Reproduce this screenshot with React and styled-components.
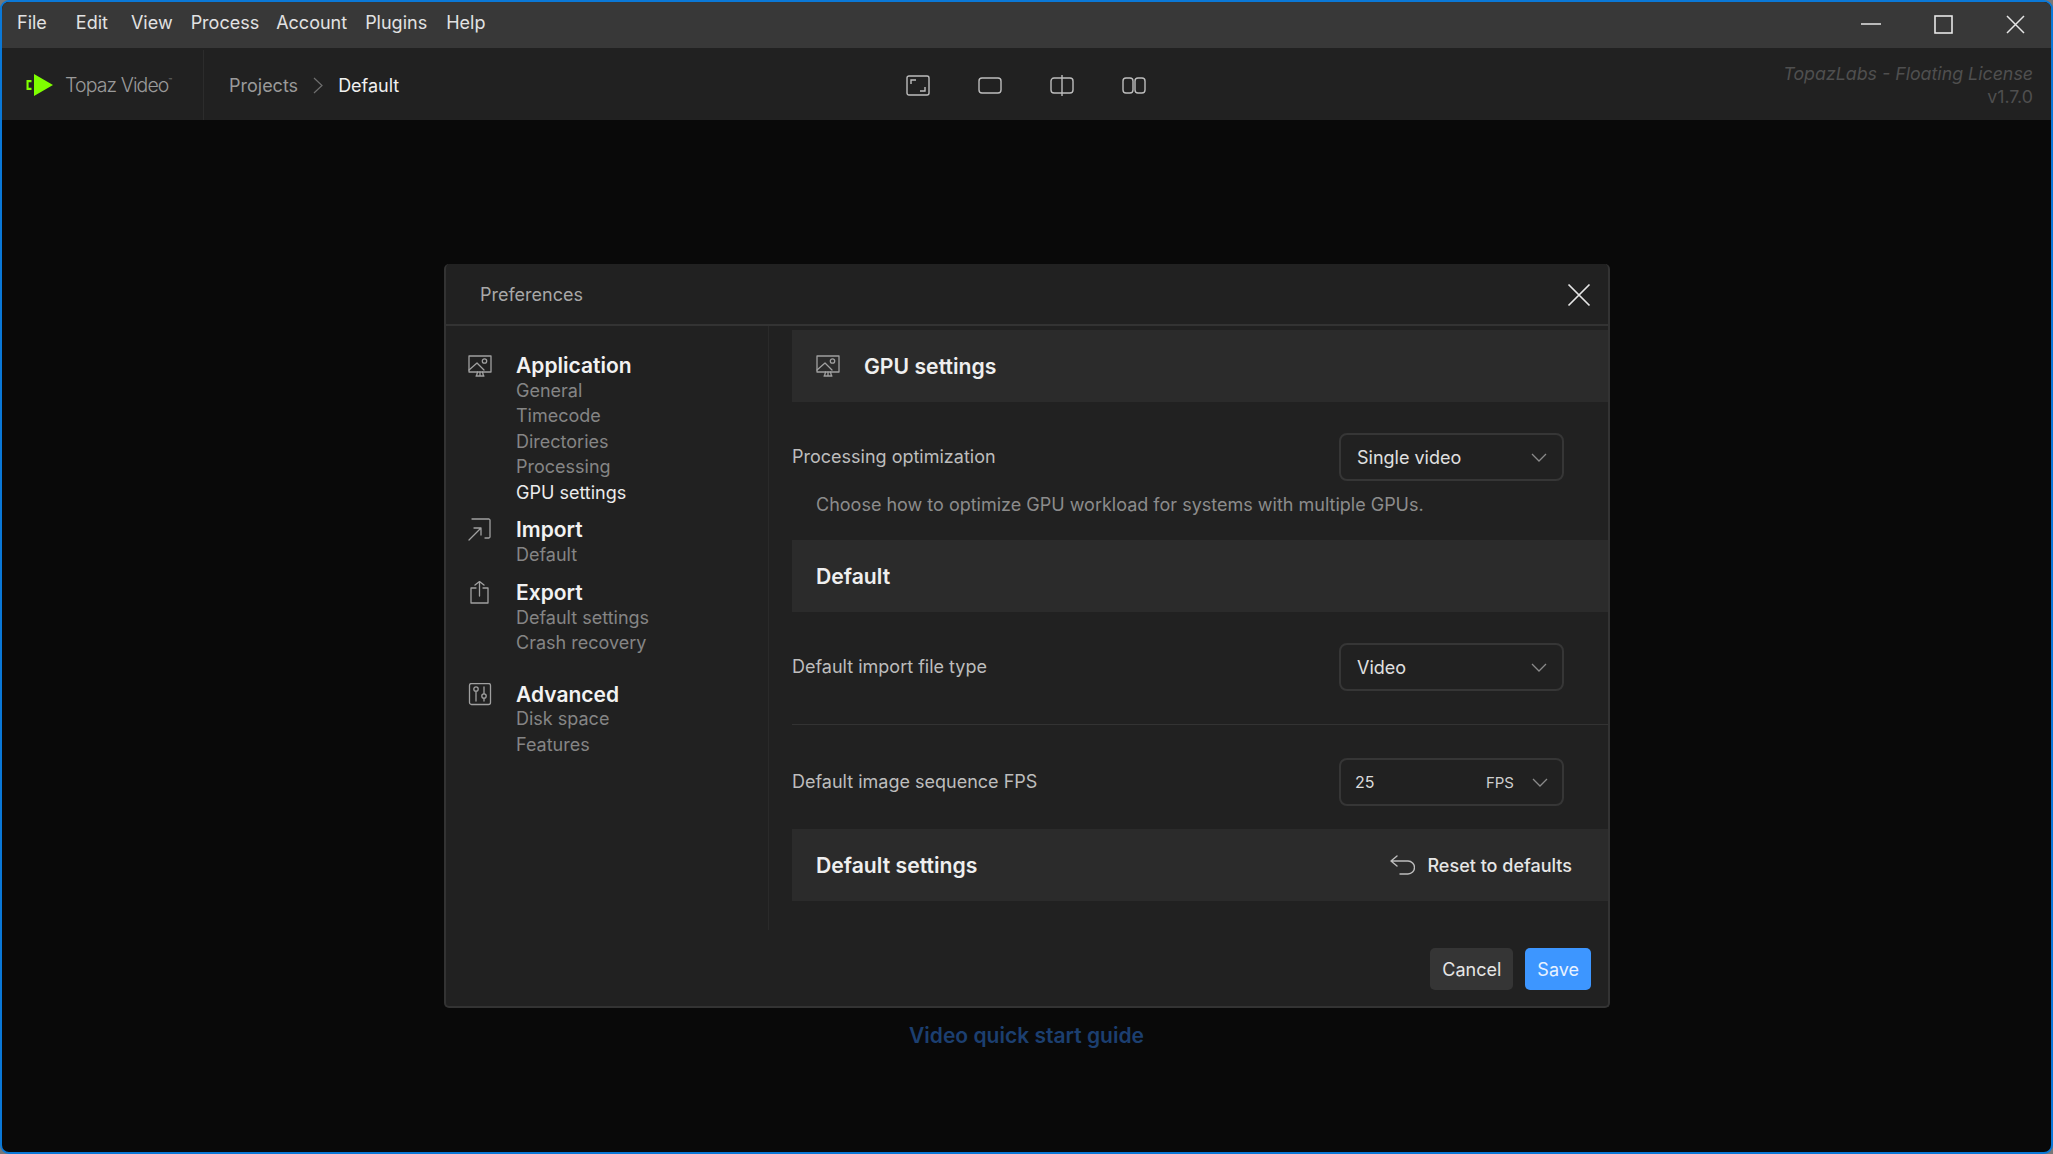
import styled, { createGlobalStyle } from 'styled-components'

const GlobalStyle = createGlobalStyle`
  html, body {
    margin: 0;
    padding: 0;
    background: #777;
  }
  body {
    font-family: "Inter", "Liberation Sans", sans-serif;
    overflow: hidden;
  }
  * { box-sizing: border-box; }
`

const MENU = [
  { label: 'File', gap: 29 },
  { label: 'Edit', gap: 23 },
  { label: 'View', gap: 18 },
  { label: 'Process', gap: 17 },
  { label: 'Account', gap: 18 },
  { label: 'Plugins', gap: 19 },
  { label: 'Help', gap: 0 },
]

const NAV = [
  { title: 'Application', Icon: MonitorIcon, gap: 0, items: ['General', 'Timecode', 'Directories', 'Processing', 'GPU settings'], active: 'GPU settings' },
  { title: 'Import', Icon: ImportIcon, gap: 11, items: ['Default'] },
  { title: 'Export', Icon: ExportIcon, gap: 12, items: ['Default settings', 'Crash recovery'] },
  { title: 'Advanced', Icon: SlidersIcon, gap: 25, items: ['Disk space', 'Features'] },
]

function Svg({ size = 24, height, children }) {
  return (
    <svg width={size} height={height || size} viewBox={`0 0 ${size} ${height || size}`} fill="none" stroke="currentColor" strokeWidth="1.3" strokeLinecap="round" strokeLinejoin="round">
      {children}
    </svg>
  )
}

function MonitorIcon() {
  return (
    <Svg size={24}>
      <path d="M1 2h22v16H1z" />
      <path d="M1 16l8-7 7 7" />
      <circle cx="16.5" cy="7" r="2.2" />
      <path d="M12 18v3.5M8 22h8M9.5 18l-1 4M14.5 18l1 4" />
    </Svg>
  )
}

function ImportIcon() {
  return (
    <Svg size={24}>
      <path d="M4 1h17a2 2 0 0 1 1 1v17a2 2 0 0 1-1 1h-4" />
      <path d="M1 22L13 10M6 10h7v7" />
    </Svg>
  )
}

function ExportIcon() {
  return (
    <Svg size={24}>
      <path d="M8 7H3v15h17V7h-5" />
      <path d="M11.5 15V.5M7 4l4.5-3.5L16 4" />
    </Svg>
  )
}

function SlidersIcon() {
  return (
    <Svg size={24}>
      <rect x="1.5" y="0.5" width="21" height="21" rx="2" />
      <circle cx="8" cy="6" r="2.2" />
      <circle cx="16" cy="13" r="2.2" />
      <path d="M8 8.5V18M16 4v6.5M16 15.5V18" />
    </Svg>
  )
}

function Chevron() {
  return (
    <svg width="16" height="9" viewBox="0 0 16 9" fill="none" stroke="#8a8a8a" strokeWidth="1.3">
      <path d="M1 1l7 7 7-7" />
    </svg>
  )
}

function Logo() {
  return (
    <svg width="29" height="24" viewBox="0 0 29 24">
      <path d="M9 1l19 11L9 23z" fill="#7fff00" />
      <path d="M6.5 7H1.5v10h5v-2.2H3.6V9.2h2.9z" fill="#7fff00" />
    </svg>
  )
}

function App() {
  return (
    <>
      <GlobalStyle />
      <Window>
        <TitleBar>
          <Menu>
            {MENU.map(m => <MenuItem key={m.label} $gap={m.gap}>{m.label}</MenuItem>)}
          </Menu>
          <WindowControls>
            <WindowButton>
              <svg width="20" height="2" viewBox="0 0 20 2"><path d="M0 1h20" stroke="#e6e6e6" strokeWidth="1.6" /></svg>
            </WindowButton>
            <WindowButton>
              <svg width="19" height="19" viewBox="0 0 19 19" fill="none"><rect x="1" y="1" width="17" height="17" stroke="#e6e6e6" strokeWidth="1.6" /></svg>
            </WindowButton>
            <WindowButton>
              <svg width="19" height="19" viewBox="0 0 19 19" fill="none"><path d="M1 1l17 17M18 1L1 18" stroke="#e6e6e6" strokeWidth="1.5" /></svg>
            </WindowButton>
          </WindowControls>
        </TitleBar>

        <Toolbar>
          <ToolbarLeft>
            <Brand>
              <Logo />
              <BrandName>Topaz Video<sup>™</sup></BrandName>
            </Brand>
            <Breadcrumb>
              <Crumb>Projects</Crumb>
              <svg width="10" height="17" viewBox="0 0 10 17" fill="none" stroke="#6e6e6e" strokeWidth="1.2"><path d="M1 1l8 7.5L1 16" /></svg>
              <Crumb $current>Default</Crumb>
            </Breadcrumb>
          </ToolbarLeft>
          <ViewModes>
            <ViewButton>
              <svg width="24" height="21" viewBox="0 0 24 21" fill="none" stroke="#bdbdbd" strokeWidth="1.4">
                <rect x="1" y="1" width="22" height="19" rx="2" />
                <path d="M5 9V5h5M19 12v4h-5" />
              </svg>
            </ViewButton>
            <ViewButton>
              <svg width="24" height="17" viewBox="0 0 24 17" fill="none" stroke="#bdbdbd" strokeWidth="1.4">
                <rect x="1" y="1" width="22" height="15" rx="3" />
              </svg>
            </ViewButton>
            <ViewButton>
              <svg width="24" height="21" viewBox="0 0 24 21" fill="none" stroke="#bdbdbd" strokeWidth="1.4">
                <path d="M12 3H4a3 3 0 0 0-3 3v9a3 3 0 0 0 3 3h8M12 3h8a3 3 0 0 1 3 3v9a3 3 0 0 1-3 3h-8M12 0v21" />
              </svg>
            </ViewButton>
            <ViewButton>
              <svg width="24" height="17" viewBox="0 0 24 17" fill="none" stroke="#bdbdbd" strokeWidth="1.4">
                <rect x="1" y="1" width="10" height="15" rx="3" />
                <rect x="13" y="1" width="10" height="15" rx="3" />
              </svg>
            </ViewButton>
          </ViewModes>
          <License>
            <em>TopazLabs - Floating License</em>
            <span>v1.7.0</span>
          </License>
        </Toolbar>

        <Stage>
          <Dialog>
            <DialogHeader>
              <DialogTitle>Preferences</DialogTitle>
              <svg width="24" height="24" viewBox="0 0 24 24" fill="none" stroke="#e6e6e6" strokeWidth="1.7"><path d="M1.5 1.5l21 21M22.5 1.5l-21 21" /></svg>
            </DialogHeader>
            <DialogBody>
              <Sidebar>
                {NAV.map(({ title, Icon, gap, items, active }) => (
                  <NavGroup key={title} $gap={gap}>
                    <NavIcon><Icon /></NavIcon>
                    <div>
                      <NavTitle>{title}</NavTitle>
                      {items.map(item => <NavItem key={item} $active={item === active}>{item}</NavItem>)}
                    </div>
                  </NavGroup>
                ))}
              </Sidebar>
              <Content>
                <SectionHeader>
                  <SectionIcon><MonitorIcon /></SectionIcon>
                  <SectionTitle>GPU settings</SectionTitle>
                </SectionHeader>
                <Row $top={31} $bottom={0}>
                  <RowLabel>Processing optimization</RowLabel>
                  <Select $height={48}>
                    <SelectValue>Single video</SelectValue>
                    <Chevron />
                  </Select>
                </Row>
                <Helper>Choose how to optimize GPU workload for systems with multiple GPUs.</Helper>

                <SectionHeader>
                  <SectionTitle>Default</SectionTitle>
                </SectionHeader>
                <Row $top={31} $bottom={33} $divider>
                  <RowLabel>Default import file type</RowLabel>
                  <Select $height={48}>
                    <SelectValue>Video</SelectValue>
                    <Chevron />
                  </Select>
                </Row>
                <Row $top={33} $bottom={23}>
                  <RowLabel>Default image sequence FPS</RowLabel>
                  <Select $height={48} $compact>
                    <NumberValue>25</NumberValue>
                    <Unit>FPS</Unit>
                    <Chevron />
                  </Select>
                </Row>

                <SectionHeader>
                  <SectionTitle>Default settings</SectionTitle>
                  <ResetButton>
                    <svg width="25" height="20" viewBox="0 0 25 20" fill="none" stroke="#bdbdbd" strokeWidth="1.4" strokeLinecap="round" strokeLinejoin="round">
                      <path d="M7 1L1 6l6 5M1 6h17a5.5 5.5 0 0 1 0 13h-8" />
                    </svg>
                    Reset to defaults
                  </ResetButton>
                </SectionHeader>
              </Content>
            </DialogBody>
            <DialogFooter>
              <Button>Cancel</Button>
              <Button $primary>Save</Button>
            </DialogFooter>
          </Dialog>
          <GuideLink>Video quick start guide</GuideLink>
        </Stage>
      </Window>
    </>
  )
}

export default App

const Window = styled.div`
  width: 2053px;
  height: 1154px;
  border: 2px solid #0a78d7;
  border-radius: 9px;
  overflow: hidden;
  display: flex;
  flex-direction: column;
  background: #090909;
`

const TitleBar = styled.div`
  height: 46px;
  flex: none;
  display: flex;
  justify-content: space-between;
  background: #383838;
`

const Menu = styled.div`
  display: flex;
  align-items: center;
  padding-left: 15px;
  padding-bottom: 6px;
`

const MenuItem = styled.span`
  font-size: 18px;
  color: #e2e2e2;
  margin-right: ${p => p.$gap}px;
`

const WindowControls = styled.div`
  display: flex;
  padding-bottom: 2px;
`

const WindowButton = styled.div`
  width: 72px;
  display: flex;
  align-items: center;
  justify-content: center;
`

const Toolbar = styled.div`
  height: 72px;
  flex: none;
  display: grid;
  grid-template-columns: 1fr auto 1fr;
  padding-top: 2px;
  background: #212121;
`

const ToolbarLeft = styled.div`
  display: flex;
`

const Brand = styled.div`
  width: 202px;
  display: flex;
  align-items: center;
  gap: 11px;
  padding-left: 23px;
  border-right: 1px solid #2c2c2c;
`

const BrandName = styled.span`
  font-size: 19.5px;
  font-weight: 300;
  letter-spacing: -0.9px;
  color: #9a9a9a;

  sup {
    font-size: 6px;
    vertical-align: 9px;
  }
`

const Breadcrumb = styled.div`
  display: flex;
  align-items: center;
  gap: 15px;
  padding-left: 25px;
`

const Crumb = styled.span`
  font-size: 18px;
  color: ${p => (p.$current ? '#f0f0f0' : '#9a9a9a')};
`

const ViewModes = styled.div`
  display: flex;
  padding-right: 2px;
`

const ViewButton = styled.div`
  width: 72px;
  display: flex;
  align-items: center;
  justify-content: center;
`

const License = styled.div`
  display: flex;
  flex-direction: column;
  align-items: flex-end;
  justify-content: center;
  padding-right: 18px;
  font-size: 17.8px;
  line-height: 23px;
  color: #4f4f4f;
`

const Stage = styled.div`
  flex: 1;
  display: flex;
  flex-direction: column;
  align-items: center;
  padding-top: 144px;
`

const Dialog = styled.div`
  width: 1166px;
  height: 744px;
  display: flex;
  flex-direction: column;
  margin-left: 1px;
  background: #212121;
  border: 2px solid #333;
  border-top: none;
  border-radius: 5px;
`

const DialogHeader = styled.div`
  height: 62px;
  flex: none;
  display: flex;
  align-items: center;
  justify-content: space-between;
  padding: 1px 17px 0 34px;
  border-bottom: 2px solid #333;
`

const DialogTitle = styled.span`
  font-size: 18px;
  color: #a8a8a8;
`

const DialogBody = styled.div`
  height: 604px;
  flex: none;
  display: flex;
`

const Sidebar = styled.nav`
  width: 323px;
  flex: none;
  padding: 26px 0 0 22px;
  border-right: 1px solid #2a2a2a;
`

const NavGroup = styled.div`
  display: flex;
  margin-top: ${p => p.$gap}px;
`

const NavIcon = styled.div`
  width: 48px;
  flex: none;
  color: #a0a0a0;
  padding-top: 2px;
`

const NavTitle = styled.div`
  padding-top: 3px;
  font-size: 21px;
  line-height: 22.5px;
  font-weight: 600;
  color: #f2f2f2;
`

const NavItem = styled.div`
  font-size: 18px;
  line-height: 25.5px;
  color: ${p => (p.$active ? '#ececec' : '#858585')};
`

const Content = styled.div`
  flex: 1;
  padding-top: 4px;
  margin-left: 23px;
  min-width: 0;
`

const SectionHeader = styled.div`
  height: 72px;
  display: flex;
  align-items: center;
  padding: 0 36px 0 24px;
  background: #2b2b2b;
`

const SectionIcon = styled.div`
  width: 48px;
  color: #a0a0a0;
  display: flex;
`

const SectionTitle = styled.span`
  flex: 1;
  font-size: 21.2px;
  font-weight: 600;
  color: #efefef;
`

const ResetButton = styled.div`
  display: flex;
  align-items: center;
  gap: 12px;
  font-size: 18px;
  font-weight: 500;
  color: #e6e6e6;
`

const Row = styled.div`
  display: flex;
  align-items: center;
  justify-content: space-between;
  padding: ${p => p.$top}px 44px ${p => p.$bottom}px 0;
  border-bottom: ${p => (p.$divider ? '1px solid #333' : 'none')};
`

const RowLabel = styled.span`
  padding-bottom: 2px;
  font-size: 18px;
  color: #bdbdbd;
`

const Select = styled.div`
  width: 225px;
  height: ${p => p.$height}px;
  display: flex;
  align-items: center;
  padding: 0 ${p => (p.$compact ? 14 : 15)}px 0 ${p => (p.$compact ? 14 : 16)}px;
  border: 2px solid #363636;
  border-radius: 8px;
`

const SelectValue = styled.span`
  flex: 1;
  font-size: 18px;
  color: #e0e0e0;
`

const NumberValue = styled.span`
  flex: 1;
  font-size: 16px;
  color: #dcdcdc;
`

const Unit = styled.span`
  font-size: 15px;
  color: #cfcfcf;
  margin-right: 18px;
`

const Helper = styled.p`
  margin: 0;
  padding: 11px 0 23px 24px;
  font-size: 18px;
  line-height: 25px;
  color: #8c8c8c;
`

const DialogFooter = styled.div`
  flex: 1;
  display: flex;
  justify-content: flex-end;
  gap: 12px;
  padding: 18px 17px 0 0;
`

const Button = styled.div`
  height: 42px;
  display: flex;
  align-items: center;
  padding: 0 12px;
  border-radius: 5px;
  font-size: 18px;
  color: ${p => (p.$primary ? '#e8f2ff' : '#e6e6e6')};
  background: ${p => (p.$primary ? '#3d96ff' : '#353535')};
`

const GuideLink = styled.div`
  margin-top: 15px;
  font-size: 21px;
  font-weight: 600;
  color: #1c3f70;
`
